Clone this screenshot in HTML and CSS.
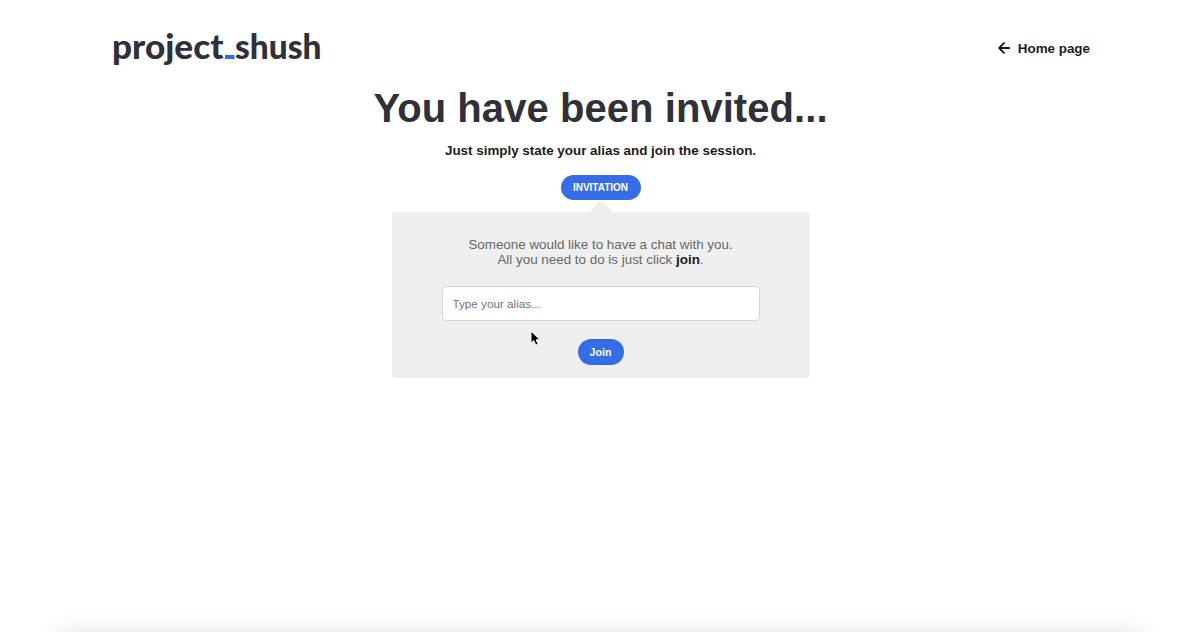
FILE: index.html
```html
<!DOCTYPE html>
<html lang="en">
<head>
<meta charset="utf-8">
<title>project_shush</title>
<link rel="stylesheet" href="styles.css">
</head>
<body>
<header class="header">
  <svg class="logo" width="212" height="40" viewBox="0 0 212 40" role="img" aria-label="project_shush">
    <text class="logo-text" x="0" y="29.7" textLength="111.5" lengthAdjust="spacingAndGlyphs">project</text>
    <rect class="logo-dash" x="113" y="26" width="9.5" height="4"/>
    <text class="logo-text" x="123" y="29.7" textLength="86.5" lengthAdjust="spacingAndGlyphs">shush</text>
  </svg>
  <a class="home">
    <svg class="arrow" width="12" height="12" viewBox="0 0 12 12"><path d="M11.3 6H1.5M6 1.2L1.2 6L6 10.8"/></svg>
    <span>Home page</span>
  </a>
</header>
<main class="main">
  <h1 class="title">You have been invited...</h1>
  <p class="subtitle">Just simply state your alias and join the session.</p>
  <span class="badge">INVITATION</span>
  <svg class="notch" width="26" height="13" viewBox="0 0 26 13"><path d="M0 13L11.2 1.8Q13 0 14.8 1.8L26 13Z"/></svg>
  <section class="card">
    <p class="message">Someone would like to have a chat with you.<br>All you need to do is just click <b class="strong">join</b>.</p>
    <input class="alias" type="text" placeholder="Type your alias...">
    <button class="join">Join</button>
  </section>
</main>
<div class="dock"><div class="dock-shadow"></div></div>
<svg class="cursor" width="12" height="17" viewBox="0 0 12 17"><path d="M1 1V13.2L3.8 10.6L5.8 15.2L8.2 14.2L6.2 9.8H10Z"/></svg>
</body>
</html>
```
FILE: styles.css
```css
* { box-sizing: border-box; }
body {
  margin: 0;
  height: 632px;
  overflow: hidden;
  position: relative;
  background: #fff;
  color: #1b1c21;
  font-family: "Liberation Sans", Arial, sans-serif;
}
.header {
  display: flex;
  justify-content: space-between;
  padding: 29px 110px 0 112px;
  height: 84px;
}
.logo { overflow: visible; }
.logo-text { font: 900 34px Lato, sans-serif; fill: #303138; }
.logo-dash { fill: #326be6; }
.home {
  display: flex;
  align-items: center;
  gap: 8px;
  height: 38px;
  font-size: 13.4px;
  font-weight: bold;
}
.arrow { fill: none; stroke: #1b1c21; stroke-width: 1.8; stroke-linecap: round; stroke-linejoin: round; }
.main { display: flex; flex-direction: column; align-items: center; padding-left: 1px; }
.title { margin: 0; font-size: 40px; line-height: 49px; letter-spacing: 0.06px; color: #303138; white-space: nowrap; }
.subtitle { margin: 10px 0 0; font-size: 13.4px; line-height: 16px; font-weight: bold; white-space: nowrap; }
.badge {
  margin-top: 16px;
  width: 80px;
  height: 25px;
  border-radius: 13px;
  background: #346de6;
  color: #fff;
  font-size: 10px;
  line-height: 25px;
  font-weight: bold;
  text-align: center;
}
.notch { display: block; fill: #efefef; margin-bottom: -1px; }
.card {
  width: 418px;
  height: 166px;
  border-radius: 4px;
  background: #efefef;
  padding-top: 25px;
  display: flex;
  flex-direction: column;
  align-items: center;
}
.message { margin: 0; font-size: 13.4px; line-height: 15px; color: #66676b; text-align: center; white-space: nowrap; }
.strong { color: #1b1c21; }
.alias {
  margin-top: 19px;
  width: 318px;
  height: 35px;
  padding: 0 10px 1px;
  border: 1px solid #d4d4d4;
  border-radius: 4px;
  background: #fff;
  font: 11.7px "Liberation Sans", Arial, sans-serif;
}
.alias::placeholder { color: #757575; opacity: 1; }
.join {
  margin-top: 18px;
  width: 46px;
  height: 26px;
  padding: 0;
  border: 0;
  border-radius: 13px;
  background: #346de6;
  color: #fff;
  font: bold 10.6px "Liberation Sans", Arial, sans-serif;
}
.dock {
  position: absolute;
  left: 0;
  right: 0;
  bottom: 0;
  height: 40px;
  overflow: hidden;
  padding: 40px 68px 0;
}
.dock-shadow {
  height: 1px;
  border-radius: 1px;
  box-shadow: 0 14px 24px 12px rgba(0, 0, 0, 0.14);
}
.cursor { position: absolute; left: 530px; top: 330px; }
.cursor path { fill: #000; stroke: #fff; stroke-width: 1; }
```
